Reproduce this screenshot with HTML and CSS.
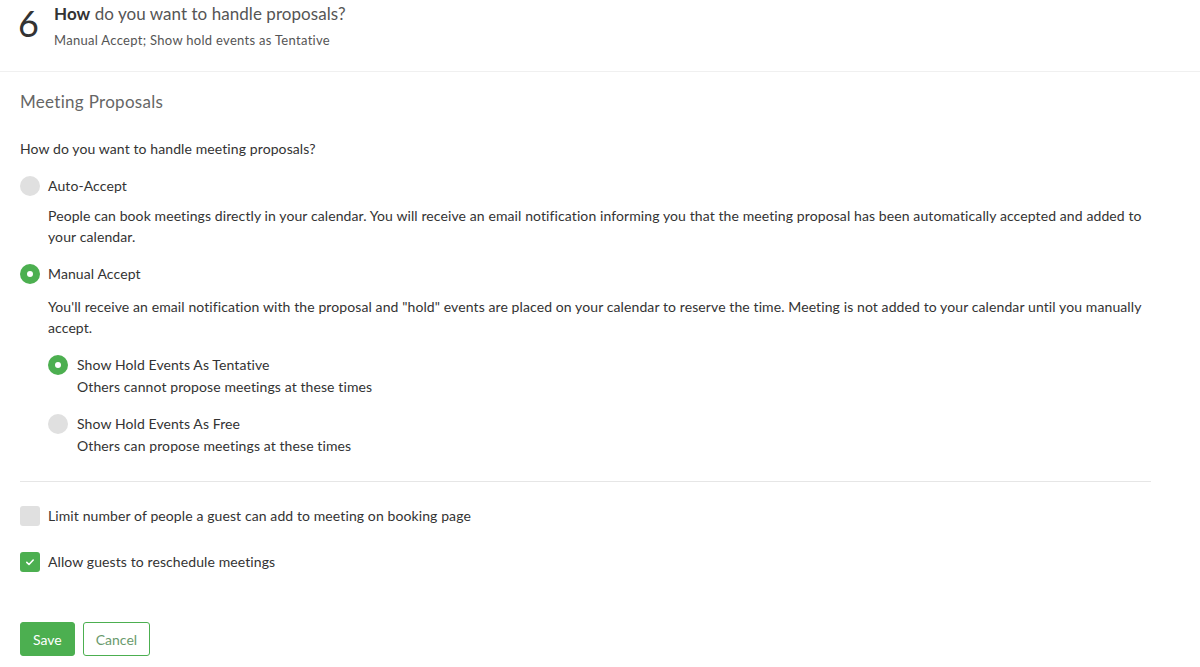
FILE: index.html
```html
<!DOCTYPE html>
<html>
<head>
<meta charset="utf-8">
<link rel="stylesheet" href="styles.css">
</head>
<body>
<header class="step-header">
  <div class="step-num">6</div>
  <div class="step-text">
    <div class="step-title"><strong>How</strong> do you want to handle proposals?</div>
    <div class="step-sub">Manual Accept; Show hold events as Tentative</div>
  </div>
</header>
<main class="content">
  <h2 class="section-title">Meeting Proposals</h2>
  <p class="question">How do you want to handle meeting proposals?</p>

  <div class="option">
    <div class="opt-row"><span class="radio"></span><span class="opt-label">Auto-Accept</span></div>
    <p class="opt-desc first">People can book meetings directly in your calendar. You will receive an email notification informing you that the meeting proposal has been automatically accepted and added to your calendar.</p>
  </div>

  <div class="option">
    <div class="opt-row"><span class="radio on"></span><span class="opt-label">Manual Accept</span></div>
    <p class="opt-desc second">You'll receive an email notification with the proposal and "hold" events are placed on your calendar to reserve the time. Meeting is not added to your calendar until you manually accept.</p>

    <div class="sub-options">
      <div class="sub-opt">
        <span class="radio on"></span>
        <div class="sub-text">
          <div class="sub-label">Show Hold Events As Tentative</div>
          <div class="sub-desc">Others cannot propose meetings at these times</div>
        </div>
      </div>
      <div class="sub-opt">
        <span class="radio"></span>
        <div class="sub-text">
          <div class="sub-label">Show Hold Events As Free</div>
          <div class="sub-desc">Others can propose meetings at these times</div>
        </div>
      </div>
    </div>
  </div>

  <hr class="divider">

  <div class="check-row"><span class="checkbox"></span><span class="opt-label">Limit number of people a guest can add to meeting on booking page</span></div>
  <div class="check-row second-check"><span class="checkbox on"><svg viewBox="0 0 20 20" width="20" height="20"><path d="M6.8 10.4 L9 12.5 L13.2 8" fill="none" stroke="#fff" stroke-width="1.6" stroke-linecap="round" stroke-linejoin="round"/></svg></span><span class="opt-label">Allow guests to reschedule meetings</span></div>

  <div class="actions">
    <button class="btn btn-save">Save</button>
    <button class="btn btn-cancel">Cancel</button>
  </div>
</main>
</body>
</html>
```
FILE: styles.css
```css
* { box-sizing: border-box; }
html, body { margin: 0; padding: 0; background: #fff; }
body {
  font-family: Lato, "Open Sans", "Liberation Sans", sans-serif;
  color: #3d3d3d;
  font-size: 14px;
  letter-spacing: 0.1px;
  width: 1200px;
  overflow: hidden;
}
.step-header {
  display: flex;
  height: 72px;
  border-bottom: 1px solid #f0f0f0;
  padding-left: 18px;
}
.step-num {
  font-size: 36px;
  line-height: 44px;
  color: #333;
  width: 36px;
  font-weight: 400;
  padding-top: 1px;
  letter-spacing: 0;
}
.step-text { padding-top: 2px; }
.step-title {
  font-size: 17px;
  line-height: 24px;
  color: #555;
  letter-spacing: 0.05px;
}
.step-title strong { color: #333; font-weight: 700; }
.step-sub {
  margin-top: 4px;
  font-size: 13px;
  line-height: 20px;
  color: #555;
  letter-spacing: 0.3px;
}
.content {
  padding: 18px 49px 0 20px;
}
.section-title {
  margin: 0;
  font-size: 17px;
  line-height: 24px;
  font-weight: 400;
  color: #666;
  letter-spacing: 0.3px;
}
.question {
  margin: 24px 0 0;
  line-height: 21px;
  color: #333;
}
.option { margin-top: 17px; }
.opt-row {
  display: flex;
  align-items: center;
  gap: 8px;
  height: 20px;
}
.opt-label { line-height: 20px; color: #333; }
.radio {
  width: 20px;
  height: 20px;
  border-radius: 50%;
  background: #e0e0e0;
  flex: none;
  position: relative;
}
.radio.on { background: #4caf50; }
.radio.on::after {
  content: "";
  position: absolute;
  left: 7px;
  top: 7px;
  width: 6px;
  height: 6px;
  border-radius: 50%;
  background: #fff;
}
.opt-desc {
  margin: 9px 0 0 28px;
  line-height: 21px;
  color: #333;
}
.opt-desc.second { margin-top: 12px; }
.sub-options { margin-left: 28px; }
.sub-opt {
  display: flex;
  gap: 9px;
  margin-top: 16px;
}
.sub-opt .radio { margin-top: 1px; }
.sub-label { line-height: 21px; color: #333; }
.sub-desc { line-height: 21px; color: #333; margin-top: 1px; }
.divider {
  border: 0;
  border-top: 1px solid #e6e6e6;
  margin: 25px 0 0;
}
.check-row {
  display: flex;
  align-items: center;
  gap: 8px;
  height: 20px;
  margin-top: 24px;
}
.check-row.second-check { margin-top: 26px; }
.checkbox {
  width: 20px;
  height: 20px;
  border-radius: 3px;
  background: #e0e0e0;
  flex: none;
  display: block;
}
.checkbox.on { background: #4caf50; }
.checkbox svg { display: block; }
.actions {
  display: flex;
  gap: 8px;
  margin-top: 50px;
}
.btn {
  font-family: inherit;
  font-size: 14px;
  letter-spacing: 0;
  height: 34px;
  border-radius: 3px;
  padding: 0 12px;
  cursor: pointer;
}
.btn-save {
  background: #4caf50;
  border: 1px solid #4caf50;
  color: #fff;
}
.btn-cancel {
  background: #fff;
  border: 1px solid #4caf50;
  color: #6a9a6d;
}
```
